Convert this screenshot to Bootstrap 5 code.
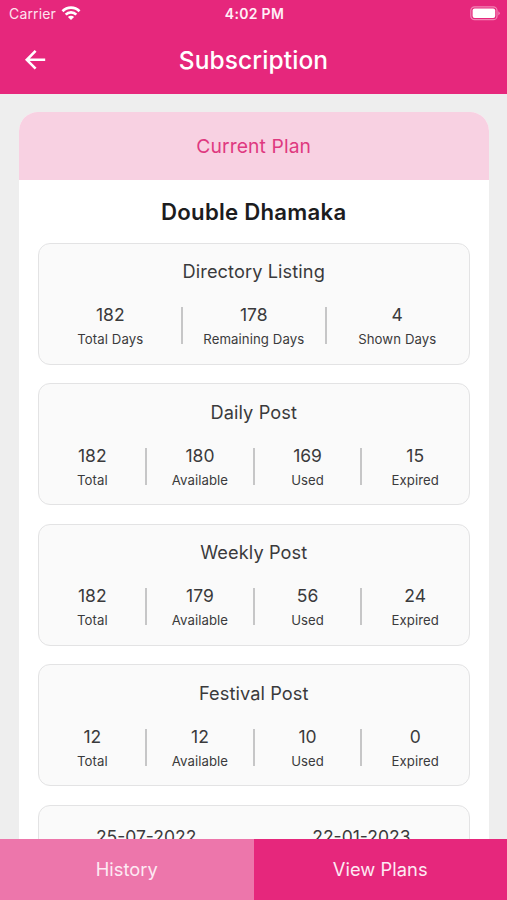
<!DOCTYPE html>
<html lang="en">
<head>
<meta charset="utf-8">
<meta name="viewport" content="width=device-width, initial-scale=1">
<title>Subscription</title>
<link href="https://cdn.jsdelivr.net/npm/bootstrap@5.3.0/dist/css/bootstrap.min.css" rel="stylesheet">
<style>
  body { font-family: Inter, "Liberation Sans", sans-serif; background: #eee; color: #3a3a3c; height: 900px; }
  .app-head { background: #e6277c; height: 94px; flex: none; color: #fff; }
  .status-row { height: 28px; font-size: 14px; line-height: 28px; padding: 0 7px 0 9px; }
  .status-row > * { flex: 1 1 0; }
  .carrier { color: #fde3ef; letter-spacing: .15px; }
  .wifi-icon { margin: -2px 0 0 5px; }
  .clock { font-size: 14px; letter-spacing: .3px; color: #fff0f7; }
  .title-row { height: 64px; padding: 0 24px; }
  .page-title { font-size: 24.5px; line-height: 64px; font-weight: 500; letter-spacing: .1px; }
  .side-slot { width: 22px; }
  .plan-area { padding: 18px 18.5px 0 19px; min-height: 0; }
  .plan-box { border-radius: 19px 19px 0 0; height: 900px; }
  .plan-head { background: #f8d1e2; color: #df3980; height: 68px; font-size: 19.3px; line-height: 69px; letter-spacing: .1px; }
  .plan-name { font-size: 22.2px; line-height: 63px; font-weight: 600; color: #1c1c1e; letter-spacing: .25px; }
  .plan-cards { padding: 0 18.5px; gap: 18.5px; margin-top: -.4px; }
  .stat-box { height: 122px; flex: none; background: #fafafa; border: 1.5px solid #e3e3e4; border-radius: 12px; padding-top: 15.5px; }
  .stat-title { font-size: 18.2px; line-height: 24px; letter-spacing: .1px; margin-bottom: 20.5px; }
  .stat-cell { height: 40px; padding-top: .5px; }
  .stat-cell + .stat-cell::before { content: ""; width: 2px; height: 37px; background: #c6c6c7; position: absolute; left: -1px; top: 3.5px; }
  .stat-num { font-size: 17.5px; line-height: 22px; letter-spacing: 0; }
  .stat-label { font-size: 13.2px; line-height: 18px; margin-top: 4px; letter-spacing: .08px; }
  .date-num { padding-top: 5px; }
  .foot-bar { height: 61px; flex: none; font-size: 18.3px; line-height: 61px; letter-spacing: .05px; color: #fff; }
  .foot-history { background: #ed76ab; color: #fdeaf3; }
  .foot-plans { background: #e6277c; color: #fdeaf3; }
</style>
<script src="https://cdn.jsdelivr.net/npm/bootstrap@5.3.0/dist/js/bootstrap.bundle.min.js"></script>
</head>
<body class="d-flex flex-column overflow-hidden">
<header class="app-head">
  <div class="status-row d-flex align-items-center">
    <div class="carrier d-flex align-items-center">Carrier
      <svg class="wifi-icon" width="20" height="16" viewBox="0 0 20 16" fill="none" stroke="#fff" stroke-width="2.7">
        <path d="M1.5 6.2a12 12 0 0 1 17 0M4.7 9.6a7.5 7.5 0 0 1 10.6 0"/>
        <path d="M10 15.1 6.9 12a4.4 4.4 0 0 1 6.2 0z" fill="#fff" stroke="none"/>
      </svg>
    </div>
    <div class="clock fw-semibold text-center">4:02 PM</div>
    <div class="d-flex justify-content-end">
      <svg width="30" height="16" viewBox="0 0 30 16">
        <rect x=".8" y=".8" width="26.2" height="12.9" rx="3.8" fill="none" stroke="#f184b5" stroke-width="1.2"/>
        <rect x="2.6" y="2.5" width="22.6" height="9.5" rx="2" fill="#fff"/>
        <path d="M28.3 5.2q3 2.1 0 4.2z" fill="#f184b5"/>
      </svg>
    </div>
  </div>
  <div class="title-row d-flex align-items-center justify-content-between">
    <div class="side-slot d-flex">
      <svg width="22" height="22" viewBox="0 0 22 22" fill="none" stroke="#fff" stroke-width="2.6">
        <path d="M21.2 10.8H3M11.6 1.9 2.8 10.8l8.8 8.9"/>
      </svg>
    </div>
    <h1 class="page-title m-0">Subscription</h1>
    <div class="side-slot"></div>
  </div>
</header>

<main class="plan-area flex-grow-1 overflow-hidden">
  <section class="plan-box bg-white overflow-hidden text-center">
    <div class="plan-head">Current Plan</div>
    <h2 class="plan-name m-0">Double Dhamaka</h2>
    <div class="plan-cards d-flex flex-column">
      <article class="stat-box">
        <div class="stat-title">Directory Listing</div>
        <div class="row g-0">
          <div class="col stat-cell position-relative"><div class="stat-num">182</div><div class="stat-label">Total Days</div></div>
          <div class="col stat-cell position-relative"><div class="stat-num">178</div><div class="stat-label">Remaining Days</div></div>
          <div class="col stat-cell position-relative"><div class="stat-num">4</div><div class="stat-label">Shown Days</div></div>
        </div>
      </article>
      <article class="stat-box">
        <div class="stat-title">Daily Post</div>
        <div class="row g-0">
          <div class="col stat-cell position-relative"><div class="stat-num">182</div><div class="stat-label">Total</div></div>
          <div class="col stat-cell position-relative"><div class="stat-num">180</div><div class="stat-label">Available</div></div>
          <div class="col stat-cell position-relative"><div class="stat-num">169</div><div class="stat-label">Used</div></div>
          <div class="col stat-cell position-relative"><div class="stat-num">15</div><div class="stat-label">Expired</div></div>
        </div>
      </article>
      <article class="stat-box">
        <div class="stat-title">Weekly Post</div>
        <div class="row g-0">
          <div class="col stat-cell position-relative"><div class="stat-num">182</div><div class="stat-label">Total</div></div>
          <div class="col stat-cell position-relative"><div class="stat-num">179</div><div class="stat-label">Available</div></div>
          <div class="col stat-cell position-relative"><div class="stat-num">56</div><div class="stat-label">Used</div></div>
          <div class="col stat-cell position-relative"><div class="stat-num">24</div><div class="stat-label">Expired</div></div>
        </div>
      </article>
      <article class="stat-box">
        <div class="stat-title">Festival Post</div>
        <div class="row g-0">
          <div class="col stat-cell position-relative"><div class="stat-num">12</div><div class="stat-label">Total</div></div>
          <div class="col stat-cell position-relative"><div class="stat-num">12</div><div class="stat-label">Available</div></div>
          <div class="col stat-cell position-relative"><div class="stat-num">10</div><div class="stat-label">Used</div></div>
          <div class="col stat-cell position-relative"><div class="stat-num">0</div><div class="stat-label">Expired</div></div>
        </div>
      </article>
      <article class="stat-box">
        <div class="row g-0">
          <div class="col"><div class="stat-num date-num">25-07-2022</div></div>
          <div class="col"><div class="stat-num date-num">22-01-2023</div></div>
        </div>
      </article>
    </div>
  </section>
</main>

<footer class="foot-bar d-flex text-center">
  <div class="foot-history w-50">History</div>
  <div class="foot-plans w-50">View Plans</div>
</footer>
</body>
</html>
